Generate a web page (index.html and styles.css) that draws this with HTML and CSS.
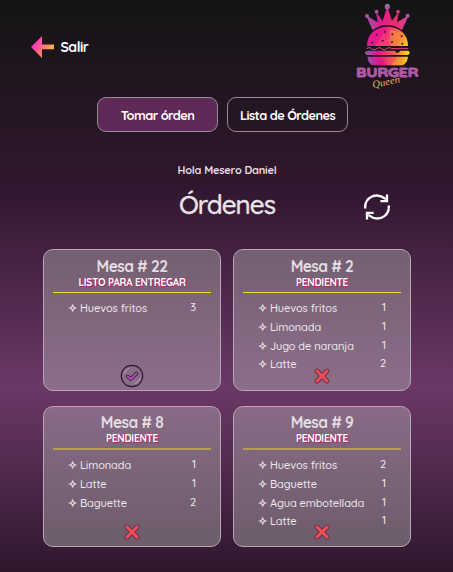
FILE: index.html
```html
<!DOCTYPE html>
<html lang="es">
<head>
<meta charset="utf-8">
<title>Burger Queen</title>
<link rel="stylesheet" href="styles.css">
</head>
<body>
<svg class="defs" aria-hidden="true">
  <defs>
    <symbol id="cross" viewBox="0 0 16 16">
      <path d="M3 3 13 13M13 3 3 13" fill="none" stroke="#642f43" stroke-width="4.8" stroke-linecap="round"/>
      <path d="M3 3 13 13M13 3 3 13" fill="none" stroke="#f04e56" stroke-width="3.1" stroke-linecap="round"/>
    </symbol>
  </defs>
</svg>
<header class="header">
  <a class="exit">
    <svg class="arrow" viewBox="0 0 23 22">
      <defs><linearGradient id="ag" x1="0" y1="0" x2="1" y2="0.6"><stop offset=".25" stop-color="#ff2fc0"/><stop offset=".9" stop-color="#f9ad45"/></linearGradient></defs>
      <path d="M0 11 11 0V8.5H23V13.3H11V22Z" fill="url(#ag)"/>
    </svg>
    <span>Salir</span>
  </a>
  <svg class="logo" viewBox="48 8 189 261">
    <defs>
      <linearGradient id="lg" x1="78" y1="100" x2="208" y2="160" gradientUnits="userSpaceOnUse">
        <stop offset="0" stop-color="#d91c92"/><stop offset=".3" stop-color="#ee168b"/><stop offset=".6" stop-color="#f56b50"/><stop offset="1" stop-color="#fbe516"/>
      </linearGradient>
      <linearGradient id="cg" x1="80" y1="0" x2="205" y2="0" gradientUnits="userSpaceOnUse">
        <stop offset="0" stop-color="#9c57a5"/><stop offset=".35" stop-color="#e0198e"/><stop offset=".7" stop-color="#ef2b70"/><stop offset="1" stop-color="#c9479b"/>
      </linearGradient>
      <linearGradient id="bg" x1="75" y1="0" x2="210" y2="0" gradientUnits="userSpaceOnUse">
        <stop offset="0" stop-color="#7b62b0"/><stop offset=".3" stop-color="#e3168b"/><stop offset=".65" stop-color="#f2604f"/><stop offset="1" stop-color="#fbe51a"/>
      </linearGradient>
    </defs>
    <path d="M98 90 78 45 113 66 108 34 128 62 142 18 156 62 176 34 171 66 206 45 186 90Q142 58 98 90Z" fill="url(#cg)"/>
    <g fill="#a857a2"><circle cx="81" cy="47" r="6"/><circle cx="110" cy="34" r="5.5"/><circle cx="142" cy="19" r="8"/><circle cx="174" cy="34" r="5.5" fill="#dc3c82"/><circle cx="203" cy="46" r="6"/></g>
    <circle cx="142" cy="14" r="4" fill="#5a9ba9"/>
    <path d="M81 137C81 60 204 60 204 137Z" fill="url(#lg)" stroke="#221421" stroke-width="4" paint-order="stroke"/>
    <path d="M105 137 130 100 154 137Z" fill="#ef3d78" opacity=".65"/>
    <path d="M154 137 148 88 190 96 170 120Z" fill="#f58a3d" opacity=".6"/>
    <path d="M80 145q8-7 15 0t15 0 15 0 15 0 15 0h50" fill="none" stroke="#e5457f" stroke-width="3"/>
    <path d="M87 151H163L172 159 182 151H202Q209 151 209 157Q209 164 198 164H87Q75 164 75 157Q75 151 87 151Z" fill="url(#bg)"/>
    <path d="M82 169H204Q201 195 180 195H105Q85 195 82 169Z" fill="url(#bg)"/>
    <path d="M105 195 124 174 143 195Z" fill="#cf1688" opacity=".55"/>
    <path d="M153 195 174 171 194 195Z" fill="#f5a22f" opacity=".65"/>
    <g fill="#34152e"><circle cx="110" cy="103" r="3"/><circle cx="135" cy="94" r="3"/><circle cx="157" cy="102" r="3"/><circle cx="185" cy="108" r="3"/><circle cx="97" cy="127" r="3"/><circle cx="128" cy="121" r="3"/><circle cx="156" cy="125" r="3"/><circle cx="187" cy="130" r="3"/></g>
    <text class="logo-burger" x="49" y="229" textLength="186" lengthAdjust="spacingAndGlyphs">BURGER</text>
    <text class="logo-queen" x="99" y="263" textLength="84" lengthAdjust="spacingAndGlyphs" transform="rotate(-12 99 263)">Queen</text>
  </svg>
</header>
<nav class="nav">
  <button class="tab active"><span class="t1">Tomar órden</span></button>
  <button class="tab"><span class="t2">Lista de Órdenes</span></button>
</nav>
<main class="main">
  <p class="hello">Hola Mesero Daniel</p>
  <div class="heading">
    <h1 class="title">Órdenes</h1>
    <svg class="refresh" viewBox="0 0 26 26" fill="none" stroke="#fff" stroke-width="2.3">
      <path d="M1.2 14.5C.5 3.5 12-2.5 21.5 4.8M24.8 11.5C25.5 22.5 14 28.5 4.5 21.2"/>
      <path d="M23 .6V7.2H16.4M3 25.4V18.8H9.6"/>
      <path d="M23.8 3V8H18.8ZM2.2 23V18H7.2Z" fill="#fff" stroke="none"/>
    </svg>
  </div>
  <section class="orders">
    <article class="card">
      <h2 class="table">Mesa # 22</h2>
      <p class="status">LISTO PARA ENTREGAR</p>
      <ul class="items">
        <li><i>✧</i><span>Huevos fritos</span><b>3</b></li>
      </ul>
      <svg class="mark check" viewBox="0 0 24 24" fill="none" stroke-linecap="round" stroke-linejoin="round">
        <circle cx="12" cy="12" r="10.7" stroke="#2d1c2d" stroke-width="1.2"/>
        <path d="M3.8 9.5Q5 6 8.5 4.5M20.2 14.5Q19 18 15.5 19.5" stroke="#c29ac2" stroke-width="1"/>
        <path d="M7.6 12.4 10.8 15 16.6 9.4" stroke="#34203a" stroke-width="3.6"/>
        <path d="M7.6 12.4 10.8 15 16.6 9.4" stroke="#b955b8" stroke-width="1.8"/>
      </svg>
    </article>
    <article class="card">
      <h2 class="table">Mesa # 2</h2>
      <p class="status">PENDIENTE</p>
      <ul class="items">
        <li><i>✧</i><span>Huevos fritos</span><b>1</b></li>
        <li><i>✧</i><span>Limonada</span><b>1</b></li>
        <li><i>✧</i><span>Jugo de naranja</span><b>1</b></li>
        <li><i>✧</i><span>Latte</span><b>2</b></li>
      </ul>
      <svg class="mark"><use href="#cross"/></svg>
    </article>
    <article class="card lower">
      <h2 class="table">Mesa # 8</h2>
      <p class="status">PENDIENTE</p>
      <ul class="items">
        <li><i>✧</i><span>Limonada</span><b>1</b></li>
        <li><i>✧</i><span>Latte</span><b>1</b></li>
        <li><i>✧</i><span>Baguette</span><b>2</b></li>
      </ul>
      <svg class="mark"><use href="#cross"/></svg>
    </article>
    <article class="card lower">
      <h2 class="table">Mesa # 9</h2>
      <p class="status">PENDIENTE</p>
      <ul class="items">
        <li><i>✧</i><span>Huevos fritos</span><b>2</b></li>
        <li><i>✧</i><span>Baguette</span><b>1</b></li>
        <li><i>✧</i><span>Agua embotellada</span><b>1</b></li>
        <li><i>✧</i><span>Latte</span><b>1</b></li>
      </ul>
      <svg class="mark"><use href="#cross"/></svg>
    </article>
  </section>
</main>
</body>
</html>
```
FILE: styles.css
```css
* { box-sizing: border-box; }
html { height: 100%; }
body {
  margin: 0;
  height: 572px;
  overflow: hidden;
  background: linear-gradient(#141414 0, #31172f 190px, #6b3866 388px, #2e172d 572px);
  color: #fff;
  font-family: Quicksand, Lato, sans-serif;
}
h1, h2, p, ul { margin: 0; padding: 0; }
.defs { position: absolute; width: 0; height: 0; }

.header {
  display: flex;
  justify-content: space-between;
  align-items: flex-start;
  height: 97px;
  padding: 3px 34px 0 31px;
}
.exit {
  display: flex;
  align-items: center;
  gap: 6.5px;
  height: 22px;
  margin-top: 33px;
  font-size: 14px;
  font-weight: 700;
  letter-spacing: -.5px;
}
.arrow { width: 23px; height: 22px; }
.logo { width: 63px; height: 87px; }
.logo-burger { font: 700 40px Quicksand, Lato, sans-serif; fill: #ae5aa5; stroke: #ae5aa5; stroke-width: 3; }
.logo-queen { font: italic 30px "Liberation Serif", serif; fill: #f6a765; }

.nav { display: flex; gap: 9px; padding-left: 97px; }
.tab {
  width: 121px;
  height: 35px;
  padding: 0;
  border: 1px solid #978b96;
  border-radius: 9px;
  background: transparent;
  color: #fff;
  font: 700 12.8px Quicksand, Lato, sans-serif;
  white-space: nowrap;
}
.active { background: #602958; }
.t1 { letter-spacing: -.57px; }
.t2 { letter-spacing: -.58px; }

.main { padding: 28px 42px 0 43px; }
.hello {
  height: 20px;
  line-height: 20px;
  text-align: center;
  font-size: 11px;
  font-weight: 700;
  letter-spacing: -.22px;
  color: #e3dde3;
}
.heading {
  display: grid;
  grid-template-columns: 1fr 96px 1fr;
  align-items: center;
  height: 49px;
}
.title {
  grid-column: 2;
  text-align: center;
  font-size: 26px;
  line-height: 48px;
  font-weight: 500;
  letter-spacing: -1px;
  -webkit-text-stroke: .4px #e8e5e8;
  color: #e8e5e8;
}
.refresh { width: 26px; height: 26px; margin: 5px 0 0 88.5px; }

.orders {
  display: grid;
  grid-template-columns: 178px 178px;
  grid-template-rows: 142px 141px;
  gap: 15px 12px;
  margin-top: 20px;
}
.card {
  position: relative;
  padding: 7px 9px 0;
  border: 1px solid #b9a4b8;
  border-radius: 10px;
  background: rgba(191, 191, 191, .4);
}
.lower { padding-top: 6px; }
.table {
  height: 18px;
  line-height: 18px;
  text-align: center;
  font-size: 15.5px;
  font-weight: 700;
  letter-spacing: -.6px;
  color: #e3dee3;
}
.status {
  height: 18px;
  line-height: 15px;
  border-bottom: 1px solid #f4db28;
  text-align: center;
  font-size: 10px;
  font-weight: 700;
  letter-spacing: -.2px;
  text-shadow: 1px 1px 1px #c41b68;
}
.lower .status { height: 19px; border-bottom: 2px solid #b99a51; }
.items { list-style: none; padding: 6px 15px 0 15px; }
.items li {
  display: flex;
  height: 18.75px;
  line-height: 19px;
  font-size: 11px;
  font-weight: 500;
  letter-spacing: -.1px;
  white-space: nowrap;
  color: #eee9ee;
}
.items i {
  width: 12px;
  font: 11px/19px "DejaVu Sans", sans-serif;
  letter-spacing: 0;
  -webkit-text-stroke: .3px #eee9ee;
}
.items b { margin: -1px 0 0 auto; font-weight: 500; }
.mark {
  position: absolute;
  left: 80px;
  bottom: 6px;
  width: 16px;
  height: 16px;
}
.check { left: 76px; bottom: 2px; width: 24px; height: 24px; }
```
